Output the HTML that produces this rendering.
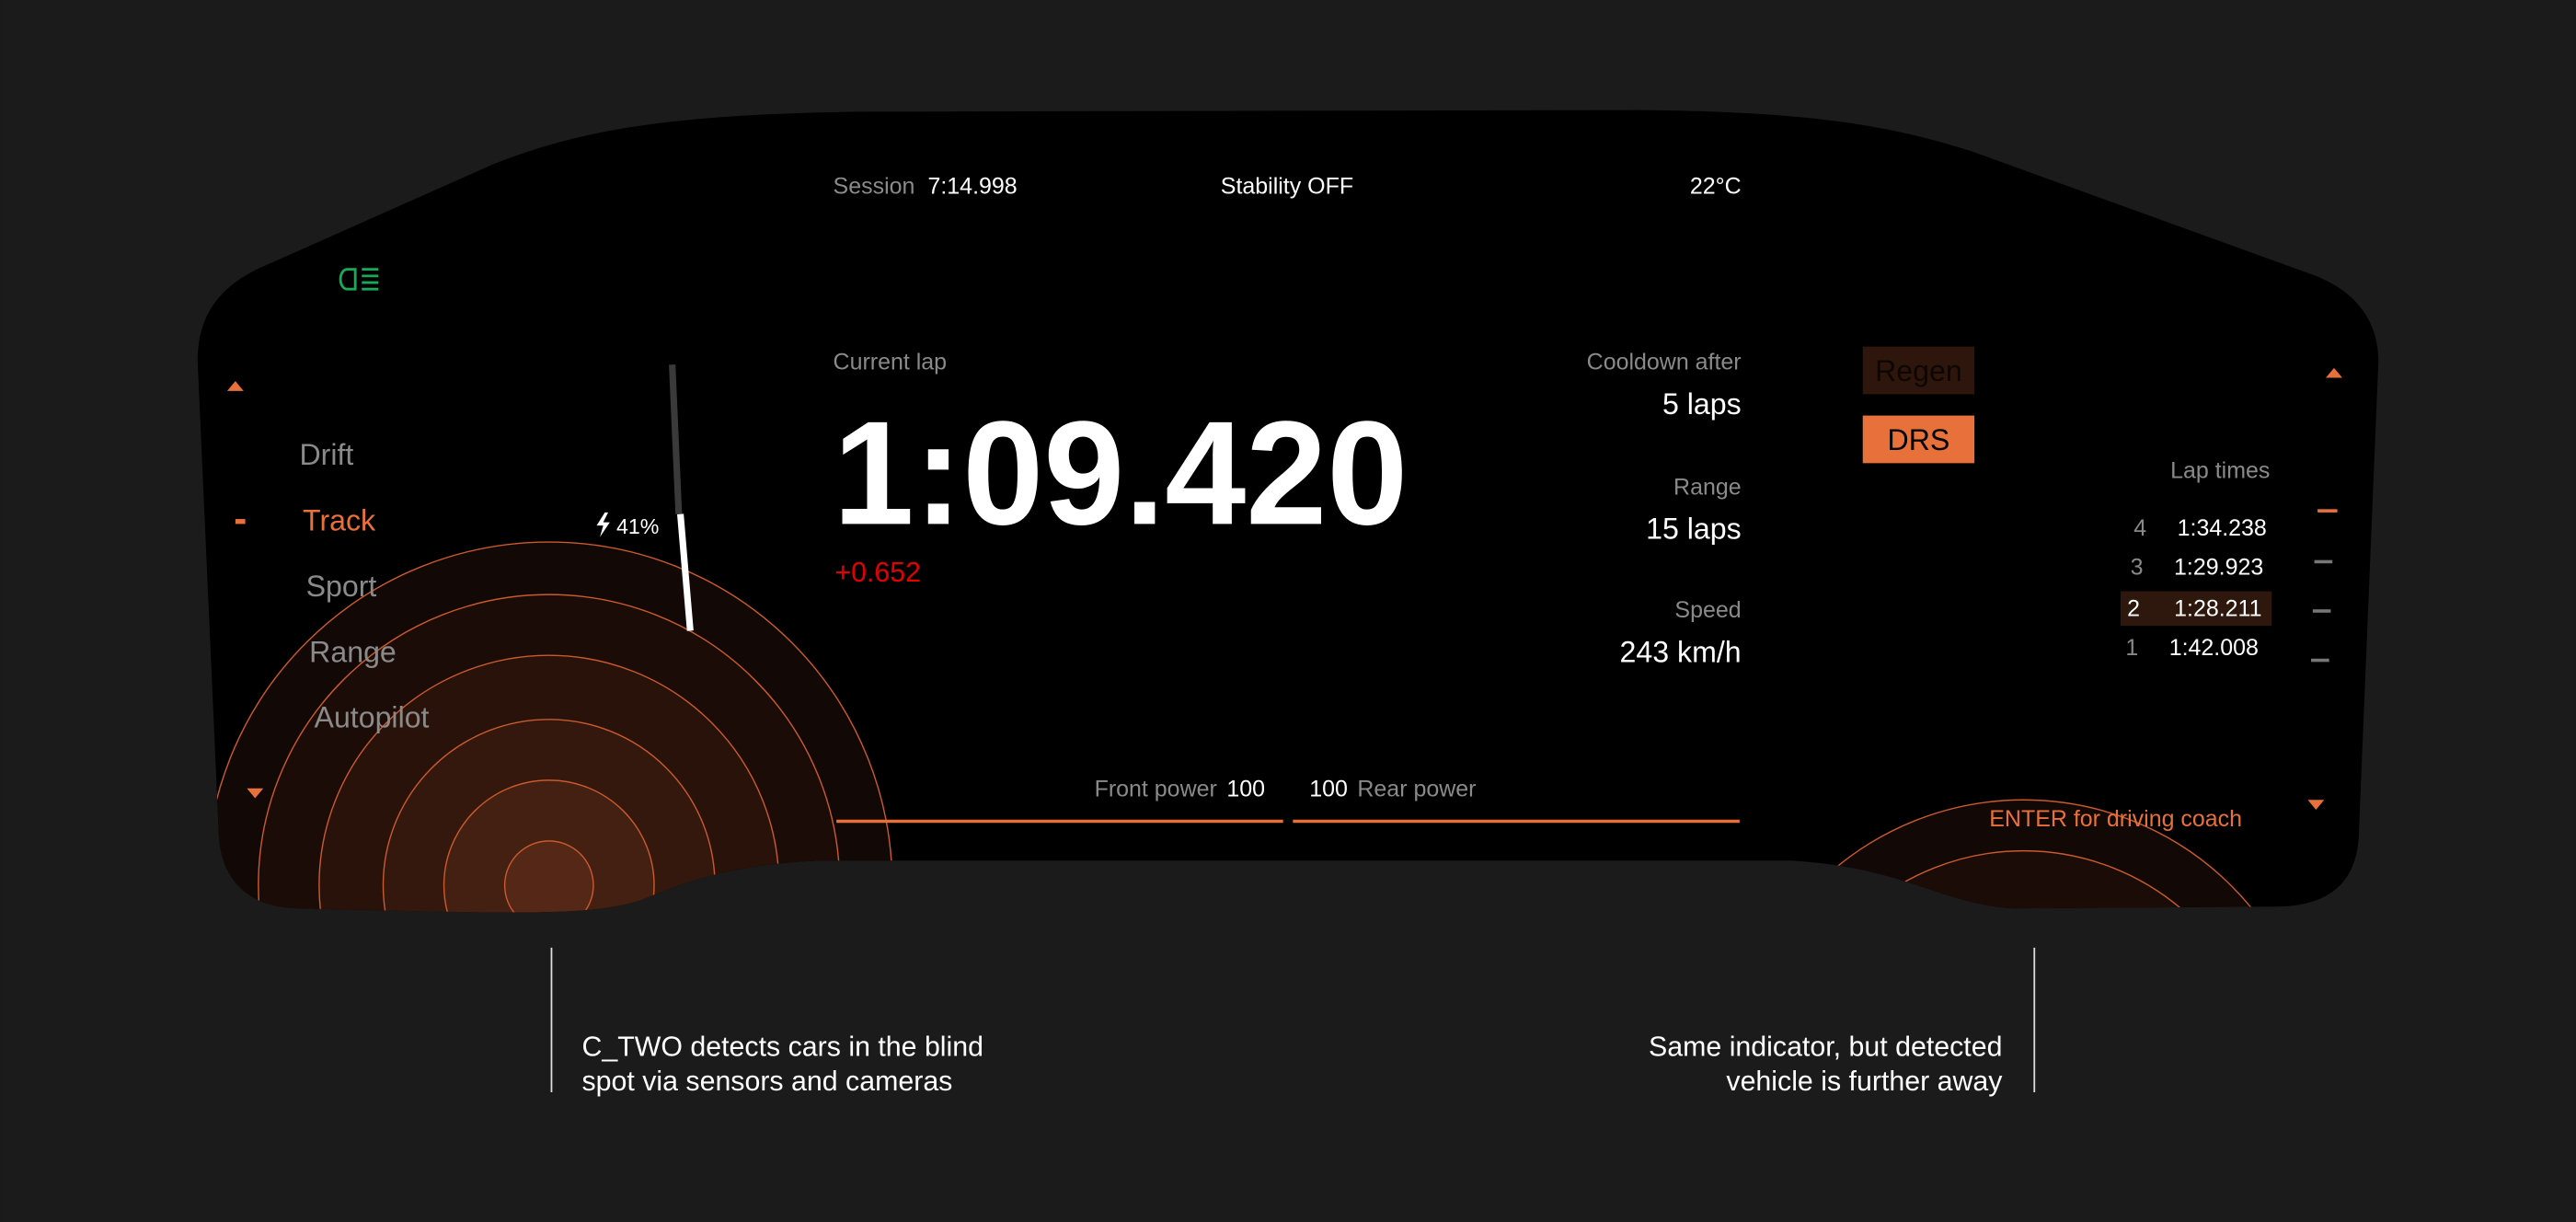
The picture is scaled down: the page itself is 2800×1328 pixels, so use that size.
<!DOCTYPE html>
<html><head><meta charset="utf-8"><style>
html,body{margin:0;padding:0;background:#1b1b1b;overflow:hidden;width:2800px;height:1328px}
svg{display:block}
text{font-family:"Liberation Sans",sans-serif}
</style></head><body>
<svg width="2800" height="1328" viewBox="0 0 1568 744" xmlns="http://www.w3.org/2000/svg">
<defs>
<clipPath id="dash"><path d="M300,100 C360,76 420,70 520,68 L1000,67 C1100,68 1150,76 1200,92 L1410,168 C1435,178 1448,196 1448,220 L1436,510 C1434,540 1415,552 1385,552 L1225,553 C1180,550 1160,528 1090,524 L500,524 C440,526 410,540 390,548 C360,558 310,556 180,553 C150,552 135,535 133,510 L120,220 C120,190 135,172 165,160 Z"/></clipPath>
</defs>
<rect width="1568" height="744" fill="#1b1b1b"/>
<path d="M300,100 C360,76 420,70 520,68 L1000,67 C1100,68 1150,76 1200,92 L1410,168 C1435,178 1448,196 1448,220 L1436,510 C1434,540 1415,552 1385,552 L1225,553 C1180,550 1160,528 1090,524 L500,524 C440,526 410,540 390,548 C360,558 310,556 180,553 C150,552 135,535 133,510 L120,220 C120,190 135,172 165,160 Z" fill="#000"/>
<g clip-path="url(#dash)" stroke="#c85a2c" stroke-width="0.8">
<circle cx="334" cy="539" r="209" fill="#120806"/>
<circle cx="334" cy="539" r="177" fill="#1c0c07"/>
<circle cx="334" cy="539" r="140" fill="#28120a"/>
<circle cx="334" cy="539" r="101" fill="#35180d"/>
<circle cx="334" cy="539" r="64" fill="#442012"/>
<circle cx="334" cy="539" r="27" fill="#552716"/>
<circle cx="1232" cy="666" r="179" fill="#120806"/>
<circle cx="1232" cy="666" r="148" fill="#1c0c07"/>
</g>
<g stroke="#1aa956" stroke-width="1.6" fill="none"><path d="M216,164 h-5 a4,6 0 0 0 0,12 h5 z"/><path d="M220,164h10M220,168h10M220,172h10M220,176h10"/></g>
<g fill="#e8703a">
<path d="M138,238 L143,232 L148,238Z"/><path d="M150,480 L160,480 L155,486Z"/>
<path d="M1416,230 L1421,224 L1426,230Z"/><path d="M1405,487 L1415,487 L1410,493Z"/>
<rect x="143" y="316" width="6" height="3"/>
<rect x="1411" y="310" width="12" height="2"/>
</g>
<g fill="#777"><rect x="1409" y="341" width="11" height="2"/><rect x="1408" y="371" width="11" height="2"/><rect x="1407" y="401" width="11" height="2"/></g>
<g font-size="18" fill="#8a8a8a">
<text x="182" y="283">Drift</text>
<text x="184" y="323" fill="#e8703a">Track</text>
<text x="186" y="363">Sport</text>
<text x="188" y="403">Range</text>
<text x="191" y="443">Autopilot</text>
</g>
<path d="M409,222 L413,313" stroke="#3a3a3a" stroke-width="4"/>
<path d="M414,313 L420,384" stroke="#fff" stroke-width="4"/>
<path d="M368,312 L363,320 L367,320 L365,327 L371,318 L367,318 L370,312Z" fill="#fff"/>
<text x="375" y="325" font-size="13" fill="#fff">41%</text>
<text x="507" y="118" font-size="14" fill="#8a8a8a">Session <tspan fill="#fff" dx="4">7:14.998</tspan></text>
<text x="743" y="118" font-size="14" fill="#fff">Stability OFF</text>
<text x="1060" y="118" font-size="14" fill="#fff" text-anchor="end">22°C</text>
<text x="507" y="225" font-size="14" fill="#8a8a8a">Current lap</text>
<text x="507" y="319" font-size="90" fill="#fff" font-weight="bold" textLength="350" lengthAdjust="spacingAndGlyphs">1:09.420</text>
<text x="508" y="354" font-size="17" fill="#e00000">+0.652</text>
<g text-anchor="end">
<text x="1060" y="225" font-size="14" fill="#8a8a8a">Cooldown after</text>
<text x="1060" y="252" font-size="18" fill="#fff">5 laps</text>
<text x="1060" y="301" font-size="14" fill="#8a8a8a">Range</text>
<text x="1060" y="328" font-size="18" fill="#fff">15 laps</text>
<text x="1060" y="376" font-size="14" fill="#8a8a8a">Speed</text>
<text x="1060" y="403" font-size="18" fill="#fff">243 km/h</text>
<text x="770" y="485" font-size="14" fill="#8a8a8a">Front power <tspan fill="#fff" dx="2">100</tspan></text>
</g>
<text x="797" y="485" font-size="14" fill="#fff">100 <tspan fill="#8a8a8a" dx="2">Rear power</tspan></text>
<path d="M509,500 H781 M787,500 H1059" stroke="#e8703a" stroke-width="2"/>
<rect x="1134" y="211" width="68" height="29" fill="#2e160c"/>
<text x="1168" y="232" font-size="18" fill="#0e0604" text-anchor="middle">Regen</text>
<rect x="1134" y="253" width="68" height="29" fill="#e8703a"/>
<text x="1168" y="274" font-size="18" fill="#000" text-anchor="middle">DRS</text>
<text x="1382" y="291" font-size="14" fill="#8a8a8a" text-anchor="end">Lap times</text>
<rect x="1291" y="360" width="92" height="21" fill="#2e170d"/>
<g font-size="14">
<text x="1299" y="326" fill="#888">4</text><text x="1380" y="326" fill="#fff" text-anchor="end">1:34.238</text>
<text x="1297" y="350" fill="#888">3</text><text x="1378" y="350" fill="#fff" text-anchor="end">1:29.923</text>
<text x="1295" y="375" fill="#fff">2</text><text x="1377" y="375" fill="#fff" text-anchor="end">1:28.211</text>
<text x="1294" y="399" fill="#888">1</text><text x="1375" y="399" fill="#fff" text-anchor="end">1:42.008</text>
</g>
<text x="1365" y="503" font-size="14" fill="#e8703a" text-anchor="end">ENTER for driving coach</text>
<path d="M335.5,577 V665 M1238.5,577 V665" stroke="#ddd" stroke-width="1"/>
<g font-size="17" fill="#fff">
<text x="354" y="643">C_TWO detects cars in the blind</text>
<text x="354" y="664">spot via sensors and cameras</text>
<text x="1219" y="643" text-anchor="end">Same indicator, but detected</text>
<text x="1219" y="664" text-anchor="end">vehicle is further away</text>
</g>
</svg>
</body></html>
